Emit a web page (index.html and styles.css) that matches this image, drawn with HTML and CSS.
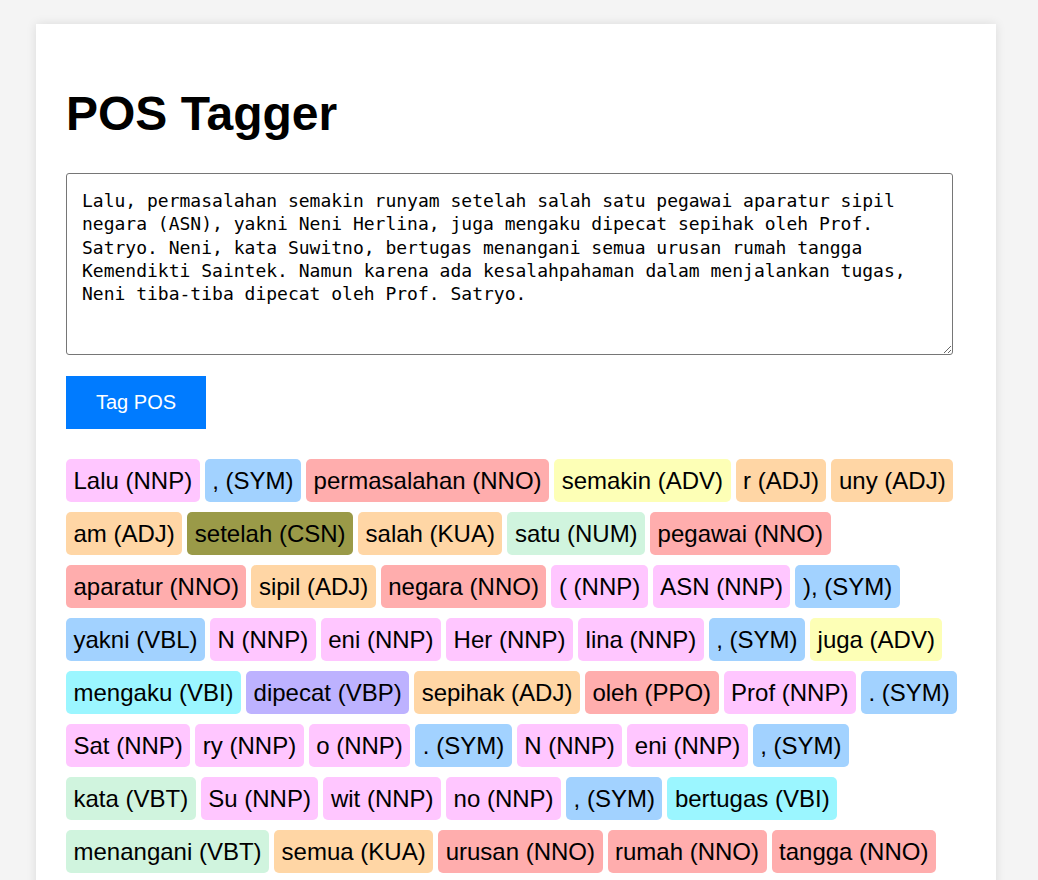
FILE: index.html
```html
<!DOCTYPE html>
<html lang="id">
<head>
<meta charset="utf-8">
<title>POS Tagger</title>
<link rel="stylesheet" href="styles.css">
</head>
<body>
<main class="card">
  <h1 class="title">POS Tagger</h1>
  <textarea class="input" spellcheck="false">Lalu, permasalahan semakin runyam setelah salah satu pegawai aparatur sipil negara (ASN), yakni Neni Herlina, juga mengaku dipecat sepihak oleh Prof. Satryo. Neni, kata Suwitno, bertugas menangani semua urusan rumah tangga Kemendikti Saintek. Namun karena ada kesalahpahaman dalam menjalankan tugas, Neni tiba-tiba dipecat oleh Prof. Satryo.</textarea>
  <button class="btn" type="button">Tag POS</button>
  <div class="tags">
    <span class="tag nnp">Lalu (NNP)</span>
    <span class="tag sym">, (SYM)</span>
    <span class="tag nno">permasalahan (NNO)</span>
    <span class="tag adv">semakin (ADV)</span>
    <span class="tag adj">r (ADJ)</span>
    <span class="tag adj">uny (ADJ)</span>
    <span class="tag adj">am (ADJ)</span>
    <span class="tag csn">setelah (CSN)</span>
    <span class="tag kua">salah (KUA)</span>
    <span class="tag num">satu (NUM)</span>
    <span class="tag nno">pegawai (NNO)</span>
    <span class="tag nno">aparatur (NNO)</span>
    <span class="tag adj">sipil (ADJ)</span>
    <span class="tag nno">negara (NNO)</span>
    <span class="tag nnp">( (NNP)</span>
    <span class="tag nnp">ASN (NNP)</span>
    <span class="tag sym">), (SYM)</span>
    <span class="tag vbl">yakni (VBL)</span>
    <span class="tag nnp">N (NNP)</span>
    <span class="tag nnp">eni (NNP)</span>
    <span class="tag nnp">Her (NNP)</span>
    <span class="tag nnp">lina (NNP)</span>
    <span class="tag sym">, (SYM)</span>
    <span class="tag adv">juga (ADV)</span>
    <span class="tag vbi">mengaku (VBI)</span>
    <span class="tag vbp">dipecat (VBP)</span>
    <span class="tag adj">sepihak (ADJ)</span>
    <span class="tag ppo">oleh (PPO)</span>
    <span class="tag nnp">Prof (NNP)</span>
    <span class="tag sym">. (SYM)</span>
    <span class="tag nnp">Sat (NNP)</span>
    <span class="tag nnp">ry (NNP)</span>
    <span class="tag nnp">o (NNP)</span>
    <span class="tag sym">. (SYM)</span>
    <span class="tag nnp">N (NNP)</span>
    <span class="tag nnp">eni (NNP)</span>
    <span class="tag sym">, (SYM)</span>
    <span class="tag vbt">kata (VBT)</span>
    <span class="tag nnp">Su (NNP)</span>
    <span class="tag nnp">wit (NNP)</span>
    <span class="tag nnp">no (NNP)</span>
    <span class="tag sym">, (SYM)</span>
    <span class="tag vbi">bertugas (VBI)</span>
    <span class="tag vbt">menangani (VBT)</span>
    <span class="tag kua">semua (KUA)</span>
    <span class="tag nno">urusan (NNO)</span>
    <span class="tag nno">rumah (NNO)</span>
    <span class="tag nno">tangga (NNO)</span>
    <span class="tag nnp">Kemendikti (NNP)</span>
    <span class="tag nnp">Saintek (NNP)</span>
    <span class="tag sym">. (SYM)</span>
    <span class="tag csn">Namun (CSN)</span>
    <span class="tag csn">karena (CSN)</span>
    <span class="tag vbi">ada (VBI)</span>
    <span class="tag nno">kesalahpahaman (NNO)</span>
  </div>
</main>
</body>
</html>
```

FILE: styles.css
```css
html, body {
  margin: 0;
  padding: 0;
}

body {
  background: #f4f4f4;
  font-family: "Liberation Sans", Arial, sans-serif;
  color: #000;
  padding-top: 24px;
  padding-bottom: 24px;
}

.card {
  box-sizing: border-box;
  width: 960px;
  margin-left: 36px;
  padding: 30px;
  background: #fff;
  box-shadow: 0 0 10px rgba(0, 0, 0, 0.1);
  display: flex;
  flex-direction: column;
  align-items: flex-start;
}

.title {
  font-size: 48px;
  font-weight: bold;
  margin: 32px 0 32px 0;
  line-height: 55px;
}

.input {
  display: block;
  box-sizing: border-box;
  width: 887px;
  height: 182px;
  padding: 15px;
  margin: 0;
  border: 1px solid #767676;
  border-radius: 3px;
  font-family: "DejaVu Sans Mono", monospace;
  font-size: 18px;
  line-height: 23.35px;
  color: #000;
  background: #fff;
  resize: vertical;
}

.btn {
  margin-top: 21px;
  padding: 15px 30px;
  border: none;
  border-radius: 0;
  background: #007bff;
  color: #fff;
  font-family: "Liberation Sans", Arial, sans-serif;
  font-size: 20px;
  line-height: 23px;
  cursor: pointer;
}

.tags {
  margin-top: 30px;
  width: 900px;
  display: flex;
  flex-wrap: wrap;
  gap: 10px 5px;
}

.tag {
  display: inline-block;
  padding: 8px 7.5px;
  border-radius: 5px;
  font-size: 24px;
  line-height: 27px;
  white-space: nowrap;
}

.nnp { background: #ffc6ff; }
.sym { background: #a2d2ff; }
.vbl { background: #a2d2ff; }
.nno { background: #ffadad; }
.ppo { background: #ffadad; }
.adv { background: #fdffb6; }
.adj { background: #ffd6a5; }
.kua { background: #ffd6a5; }
.csn { background: #9a9a48; }
.num { background: #d0f4de; }
.vbt { background: #d0f4de; }
.vbi { background: #9bf6ff; }
.vbp { background: #bdb2ff; }
```
